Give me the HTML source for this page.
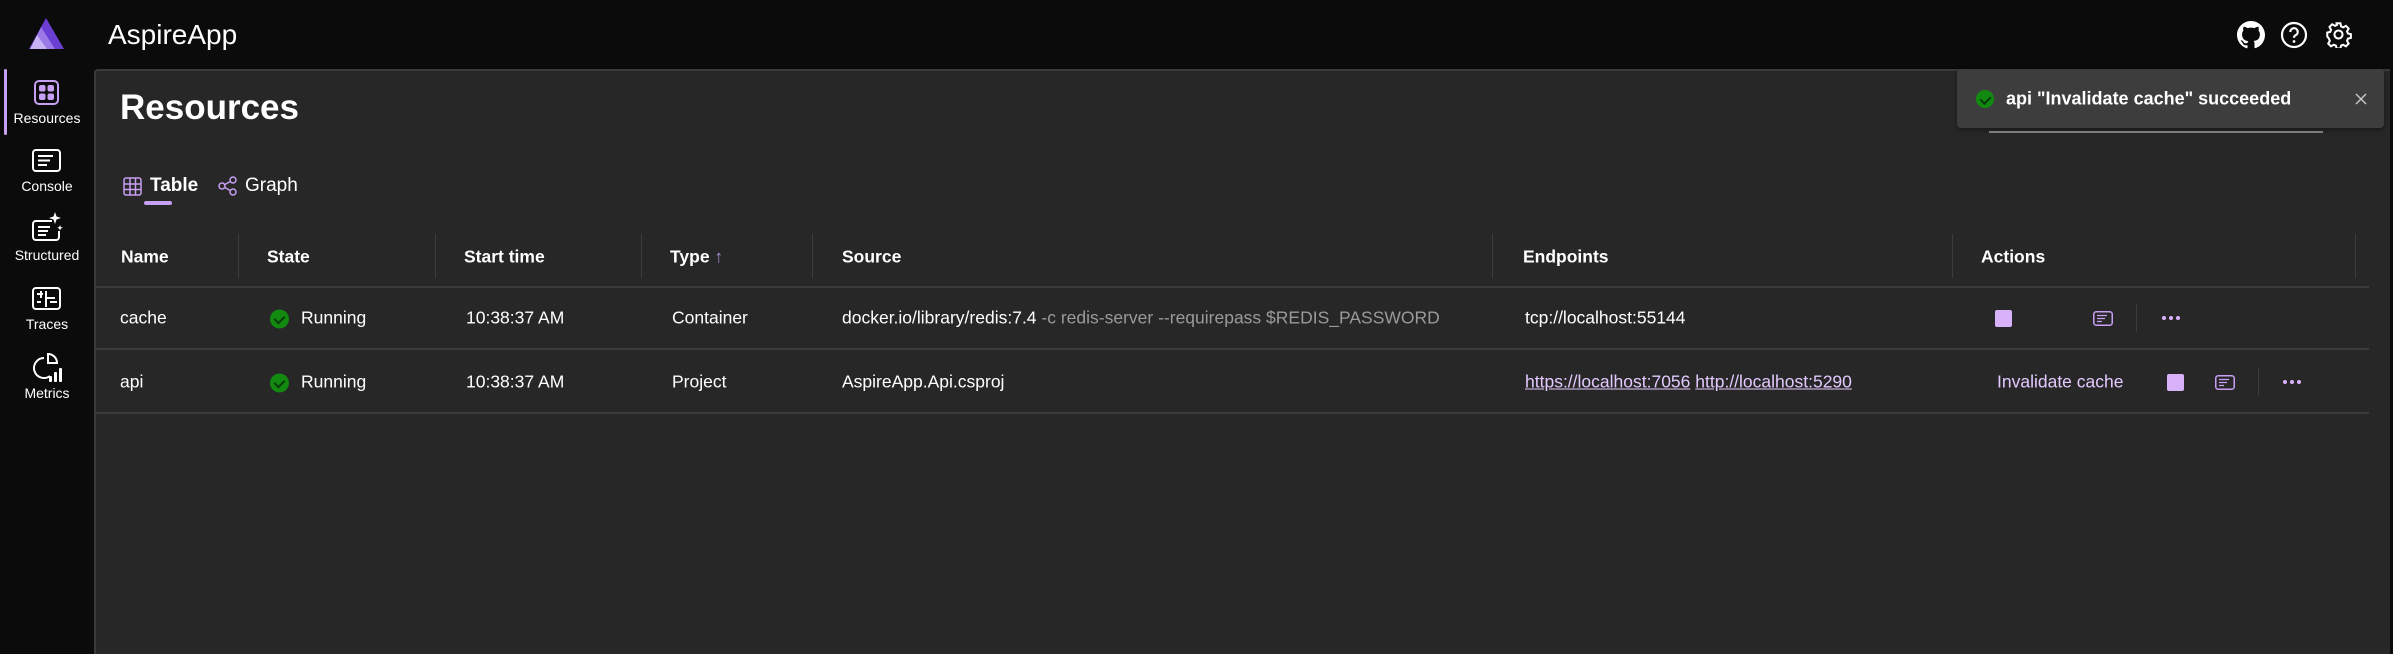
<!DOCTYPE html>
<html><head><meta charset="utf-8"><style>
*{margin:0;padding:0;box-sizing:border-box}
body{width:2393px;height:654px;background:#0b0b0b;font-family:"Liberation Sans",sans-serif;color:#fff;position:relative;overflow:hidden}
.abs{position:absolute}
.content{position:absolute;left:94px;top:69px;right:3px;bottom:0;background:#272727;border-left:2px solid #3a3a3a;border-top:2px solid #3a3a3a;border-top-left-radius:4px}
.nav{position:absolute;left:0;width:94px;text-align:center;font-size:14px;color:#fff}
.t{position:absolute;font-size:17.5px;transform:translateY(-50%);white-space:nowrap}
.h{font-weight:bold}
.vd{position:absolute;width:1px;background:#3c3c3c}
.hl{position:absolute;left:96px;width:2273px;height:2px;background:#3a3a3a}
.run{position:absolute;width:19px;height:19px;border-radius:50%;background:#118a0f;transform:translateY(-50%)}
.run:after{content:"";position:absolute;left:6px;top:4px;width:5px;height:8px;border:solid #0b3a0b;border-width:0 2px 2px 0;transform:rotate(45deg)}
.sq{position:absolute;width:17px;height:17px;background:#d7b2fb;border-radius:2px}
.dot3{position:absolute;width:18px;height:4px}
.dot3 i{position:absolute;top:0;width:4px;height:4px;border-radius:50%;background:#d7b2fb}
a{color:#e3c9ff;text-decoration:underline}
</style></head><body>
<svg class="abs" style="left:29px;top:18px" width="35" height="31" viewBox="0 0 35 31"><polygon points="17,0 35,31 0,31" fill="#6b3fd4"/><polygon points="12,9 26,31 2,31" fill="#9b7ae8"/><polygon points="8,17 18,31 1,31" fill="#c7b2f5"/></svg>
<div class="abs" style="left:108px;top:19px;font-size:28px">AspireApp</div>
<svg class="abs" style="left:2237px;top:21px" width="28" height="28" viewBox="0 0 16 16"><path fill="#fff" d="M8 0C3.6 0 0 3.6 0 8c0 3.5 2.3 6.5 5.5 7.6.4.1.5-.2.5-.4v-1.4c-2.2.5-2.7-1-2.7-1-.4-.9-.9-1.200-.9-1.2-.7-.5.1-.5.1-.5.8.1 1.2.8 1.2.8.7 1.2 1.9.9 2.3.7.1-.5.3-.9.5-1.1-1.8-.2-3.6-.9-3.6-4 0-.9.3-1.6.8-2.100-.1-.2-.4-1 .1-2.100 0 0 .7-.2 2.2.8.6-.2 1.3-.3 2-.3s1.4.1 2 .3c1.5-1 2.2-.8 2.2-.8.4 1.100.2 1.900.1 2.100.5.6.8 1.300.8 2.100 0 3.100-1.900 3.700-3.600 3.900.3.3.5.8.5 1.500v2.200c0 .2.1.5.6.4C13.7 14.5 16 11.5 16 8c0-4.4-3.6-8-8-8z"/></svg>
<svg class="abs" style="left:2280px;top:21px" width="28" height="28" viewBox="0 0 28 28"><circle cx="14" cy="14" r="12" fill="none" stroke="#fff" stroke-width="2.2"/><path d="M10.3 11a3.7 3.7 0 1 1 5.4 3.2c-1.1.6-1.7 1.2-1.7 2.5" fill="none" stroke="#fff" stroke-width="2.2"/><circle cx="14" cy="20.5" r="1.4" fill="#fff"/></svg>
<svg class="abs" style="left:2325px;top:21px" width="27" height="27" viewBox="0 0 24 24"><path fill="none" stroke="#fff" stroke-width="1.8" d="M10.3 2h3.4l.6 2.8 1.8.9 2.5-1.4 2.4 2.4-1.4 2.5.8 1.9 2.6.6v3.4l-2.6.6-.8 1.9 1.4 2.5-2.4 2.4-2.5-1.4-1.8.8-.6 2.6h-3.4l-.6-2.6-1.9-.8-2.5 1.4-2.4-2.4 1.4-2.5-.8-1.9L2 13.7v-3.4l2.6-.6.8-1.9L4 5.3l2.4-2.4 2.5 1.4 1.8-.9z"/><circle cx="12" cy="12" r="3.6" fill="none" stroke="#fff" stroke-width="1.8"/></svg>
<div class="abs" style="left:4px;top:69px;width:3px;height:66px;background:#c79ff3;border-radius:2px"></div>
<svg class="abs" style="left:34px;top:80px" width="25" height="25" viewBox="0 0 25 25"><rect x="1" y="1" width="23" height="23" rx="4" fill="none" stroke="#c79ff3" stroke-width="2"/><rect x="5" y="5" width="6.5" height="6.5" rx="2" fill="#c79ff3"/><rect x="13.5" y="5" width="6.5" height="6.5" rx="2" fill="#c79ff3"/><rect x="5" y="13.5" width="6.5" height="6.5" rx="2" fill="#c79ff3"/><rect x="13.5" y="13.5" width="6.5" height="6.5" rx="2" fill="#c79ff3"/></svg>
<div class="nav" style="top:110px">Resources</div>
<svg class="abs" style="left:32px;top:149px" width="29" height="23" viewBox="0 0 29 23"><rect x="1" y="1" width="27" height="21" rx="3" fill="none" stroke="#fff" stroke-width="2"/><path d="M6 7h15M6 11.5h12M6 16h9" stroke="#fff" stroke-width="2"/></svg>
<div class="nav" style="top:178px">Console</div>
<svg class="abs" style="left:32px;top:212px" width="31" height="29" viewBox="0 0 31 29"><path d="M20 9H4a3 3 0 0 0-3 3v13a3 3 0 0 0 3 3h20a3 3 0 0 0 3-3v-6" fill="none" stroke="#fff" stroke-width="2"/><path d="M6 15h12M6 19h10M6 23h8" stroke="#fff" stroke-width="2"/><path d="M23 0l1.5 4.5L29 6l-4.5 1.5L23 12l-1.5-4.5L17 6l4.5-1.5z" fill="#fff"/><path d="M28 13l.8 2 2 .8-2 .8-.8 2-.8-2-2-.8 2-.8z" fill="#fff"/></svg>
<div class="nav" style="top:247px">Structured</div>
<svg class="abs" style="left:32px;top:287px" width="29" height="23" viewBox="0 0 29 23"><rect x="1" y="1" width="27" height="21" rx="3" fill="none" stroke="#fff" stroke-width="2"/><path d="M5 7h6M9 4v7M14 4v16M14 11h9M18 15h7M5 15h4" stroke="#fff" stroke-width="2"/></svg>
<div class="nav" style="top:316px">Traces</div>
<svg class="abs" style="left:33px;top:353px" width="29" height="30" viewBox="0 0 29 30"><path d="M11 5a10 10 0 1 0 6 18" fill="none" stroke="#fff" stroke-width="2"/><path d="M15 1a9 9 0 0 1 9 9h-9z" fill="none" stroke="#fff" stroke-width="2"/><rect x="16" y="23" width="3" height="6" rx="1" fill="#fff"/><rect x="21" y="19" width="3" height="10" rx="1" fill="#fff"/><rect x="26" y="15" width="3" height="14" rx="1" fill="#fff"/></svg>
<div class="nav" style="top:385px">Metrics</div>
<div class="content"></div>
<div class="abs" style="left:120px;top:88px;font-size:35px;font-weight:bold">Resources</div>
<svg class="abs" style="left:123px;top:177px" width="19" height="19" viewBox="0 0 19 19"><rect x="1" y="1" width="17" height="17" rx="2" fill="none" stroke="#c79ff3" stroke-width="1.5"/><path d="M1 7h17M1 12.5h17M7 1v17M12.5 1v17" stroke="#c79ff3" stroke-width="1.5"/></svg>
<div class="abs h" style="left:150px;top:175px;font-size:19px">Table</div>
<div class="abs" style="left:144px;top:201px;width:28px;height:4px;border-radius:2px;background:#c79ff3"></div>
<svg class="abs" style="left:218px;top:176px" width="19" height="20" viewBox="0 0 19 20"><circle cx="4" cy="10" r="3" fill="none" stroke="#c79ff3" stroke-width="1.5"/><circle cx="15" cy="4" r="3" fill="none" stroke="#c79ff3" stroke-width="1.5"/><circle cx="15" cy="16" r="3" fill="none" stroke="#c79ff3" stroke-width="1.5"/><path d="M6.6 8.6l5.8-3.2M6.6 11.4l5.8 3.2" stroke="#c79ff3" stroke-width="1.5"/></svg>
<div class="abs" style="left:245px;top:175px;font-size:19px">Graph</div>
<div class="t h" style="left:121px;top:257px">Name</div>
<div class="t h" style="left:267px;top:257px">State</div>
<div class="t h" style="left:464px;top:257px">Start time</div>
<div class="t h" style="left:670px;top:257px">Type <span style="color:#a58ad0;font-weight:normal">↑</span></div>
<div class="t h" style="left:842px;top:257px">Source</div>
<div class="t h" style="left:1523px;top:257px">Endpoints</div>
<div class="t h" style="left:1981px;top:257px">Actions</div>
<div class="vd" style="left:238px;top:234px;height:44px"></div>
<div class="vd" style="left:435px;top:234px;height:44px"></div>
<div class="vd" style="left:641px;top:234px;height:44px"></div>
<div class="vd" style="left:812px;top:234px;height:44px"></div>
<div class="vd" style="left:1492px;top:234px;height:44px"></div>
<div class="vd" style="left:1952px;top:234px;height:44px"></div>
<div class="vd" style="left:2355px;top:234px;height:44px"></div>
<div class="hl" style="top:286px"></div>
<div class="hl" style="top:348px"></div>
<div class="hl" style="top:412px"></div>
<div class="t" style="left:120px;top:318px">cache</div>
<div class="run" style="left:270px;top:319px"></div>
<div class="t" style="left:301px;top:318px">Running</div>
<div class="t" style="left:466px;top:318px">10:38:37 AM</div>
<div class="t" style="left:672px;top:318px">Container</div>
<div class="t" style="left:842px;top:318px">docker.io/library/redis:7.4 <span style="color:#9a9a9a">-c redis-server --requirepass $REDIS_PASSWORD</span></div>
<div class="t" style="left:1525px;top:318px">tcp://localhost:55144</div>
<div class="sq" style="left:1995px;top:310px"></div>
<svg class="abs" style="left:2093px;top:311px" width="20" height="15" viewBox="0 0 20 15"><rect x=".75" y=".75" width="18.5" height="13.5" rx="2.5" fill="none" stroke="#c79ff3" stroke-width="1.5"/><path d="M4 4.5h10M4 7.5h8M4 10.5h5" stroke="#c79ff3" stroke-width="1.3"/></svg>
<div class="vd" style="left:2136px;top:304px;height:28px"></div>
<div class="dot3" style="left:2162px;top:316px"><i style="left:0"></i><i style="left:7px"></i><i style="left:14px"></i></div>
<div class="t" style="left:120px;top:382px">api</div>
<div class="run" style="left:270px;top:383px"></div>
<div class="t" style="left:301px;top:382px">Running</div>
<div class="t" style="left:466px;top:382px">10:38:37 AM</div>
<div class="t" style="left:672px;top:382px">Project</div>
<div class="t" style="left:842px;top:382px">AspireApp.Api.csproj</div>
<div class="t" style="left:1525px;top:382px"><a>https://localhost:7056</a> <a>http://localhost:5290</a></div>
<div class="t" style="left:1997px;top:382px;color:#e3c9ff">Invalidate cache</div>
<div class="sq" style="left:2167px;top:374px"></div>
<svg class="abs" style="left:2215px;top:375px" width="20" height="15" viewBox="0 0 20 15"><rect x=".75" y=".75" width="18.5" height="13.5" rx="2.5" fill="none" stroke="#c79ff3" stroke-width="1.5"/><path d="M4 4.5h10M4 7.5h8M4 10.5h5" stroke="#c79ff3" stroke-width="1.3"/></svg>
<div class="vd" style="left:2258px;top:368px;height:28px"></div>
<div class="dot3" style="left:2283px;top:380px"><i style="left:0"></i><i style="left:7px"></i><i style="left:14px"></i></div>
<div class="abs" style="left:1989px;top:131px;width:334px;height:2px;background:#8a8a8a"></div>
<div class="abs" style="left:1957px;top:69px;width:427px;height:59px;background:#3d3d3d;border-radius:4px;box-shadow:0 2px 6px rgba(0,0,0,.4)"></div>
<div class="run" style="left:1976px;top:99px;width:18px;height:18px"></div>
<div class="t h" style="left:2006px;top:99px;font-size:18px">api "Invalidate cache" succeeded</div>
<svg class="abs" style="left:2355px;top:93px" width="12" height="12" viewBox="0 0 12 12"><path d="M1 1l10 10M11 1L1 11" stroke="#ccc" stroke-width="1.4"/></svg>
</body></html>
